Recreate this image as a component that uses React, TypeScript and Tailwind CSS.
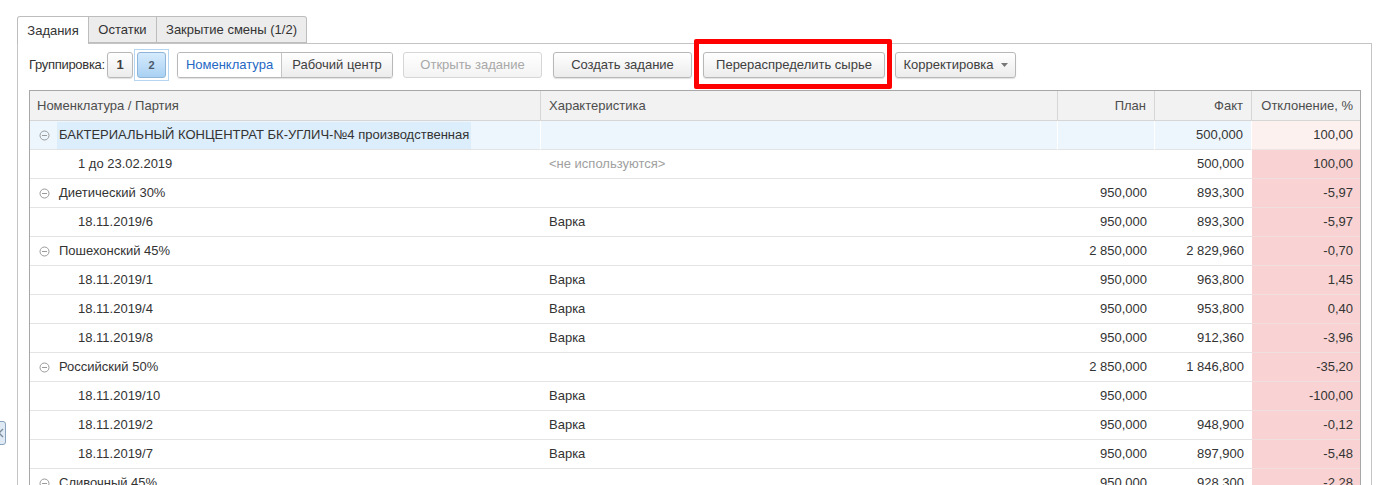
import React from "react"

type Row = {
  name: string
  group?: boolean
  chr?: string
  chrMuted?: boolean
  plan?: string
  fact?: string
  dev: string
}

const rows: Row[] = [
  { name: "БАКТЕРИАЛЬНЫЙ КОНЦЕНТРАТ БК-УГЛИЧ-№4 производственная", group: true, fact: "500,000", dev: "100,00" },
  { name: "1 до 23.02.2019", chr: "<не используются>", chrMuted: true, fact: "500,000", dev: "100,00" },
  { name: "Диетический 30%", group: true, plan: "950,000", fact: "893,300", dev: "-5,97" },
  { name: "18.11.2019/6", chr: "Варка", plan: "950,000", fact: "893,300", dev: "-5,97" },
  { name: "Пошехонский 45%", group: true, plan: "2 850,000", fact: "2 829,960", dev: "-0,70" },
  { name: "18.11.2019/1", chr: "Варка", plan: "950,000", fact: "963,800", dev: "1,45" },
  { name: "18.11.2019/4", chr: "Варка", plan: "950,000", fact: "953,800", dev: "0,40" },
  { name: "18.11.2019/8", chr: "Варка", plan: "950,000", fact: "912,360", dev: "-3,96" },
  { name: "Российский 50%", group: true, plan: "2 850,000", fact: "1 846,800", dev: "-35,20" },
  { name: "18.11.2019/10", chr: "Варка", plan: "950,000", dev: "-100,00" },
  { name: "18.11.2019/2", chr: "Варка", plan: "950,000", fact: "948,900", dev: "-0,12" },
  { name: "18.11.2019/7", chr: "Варка", plan: "950,000", fact: "897,900", dev: "-5,48" },
  { name: "Сливочный 45%", group: true, plan: "950,000", fact: "928,300", dev: "-2,28" },
]

const btn =
  "h-[26px] flex items-center justify-center rounded-[3px] border border-[#b8b8b8] bg-linear-to-b from-white to-[#ececec] shadow-[0_1px_1px_rgba(0,0,0,0.12)] text-[13px] text-[#404040]"

// collapse marker in front of group rows
const Minus = () => (
  <svg width="11" height="11" viewBox="0 0 11 11" className="shrink-0">
    <circle cx="5.5" cy="5.5" r="4.5" fill="none" stroke="#9a9a9a" strokeWidth="1" />
    <line x1="3" y1="5.5" x2="8" y2="5.5" stroke="#9a9a9a" strokeWidth="1" />
  </svg>
)

const Toolbar: React.FC = () => (
  <div className="flex items-center h-[26px]">
    <span className="text-[13px] text-[#333] w-[78px] tracking-[-0.3px] whitespace-nowrap">Группировка:</span>
    <div className={`${btn} w-[26px] text-[11px] font-bold text-[#555]`}>1</div>
    <div className="ml-[1px] p-[2px] border border-[#b5d6f3] -my-[3px]">
      <div className="h-[26px] w-[29px] flex items-center justify-center rounded-[3px] border border-[#8fb6d9] bg-linear-to-b from-[#d6ebfd] to-[#a9d1f3] text-[11px] font-bold text-[#4a5a6a]">
        2
      </div>
    </div>
    <div className="ml-[8px] flex h-[26px] rounded-[3px] border border-[#b8b8b8] shadow-[0_1px_1px_rgba(0,0,0,0.12)] overflow-hidden text-[13px]">
      <div className="w-[104px] flex items-center justify-center bg-white text-[#2468c4] border-r border-[#c4c4c4]">
        Номенклатура
      </div>
      <div className="w-[110px] flex items-center justify-center bg-linear-to-b from-white to-[#ececec] text-[#404040]">
        Рабочий центр
      </div>
    </div>
    <div className="ml-[10px] w-[139px] h-[26px] flex items-center justify-center rounded-[3px] border border-[#d6d6d6] bg-linear-to-b from-white to-[#f3f3f3] text-[13px] text-[#a8a8a8]">
      Открыть задание
    </div>
    <div className={`${btn} ml-[11px] w-[139px]`}>Создать задание</div>
    <div className={`${btn} ml-[11px] w-[182px]`}>Перераспределить сырье</div>
    <div className={`${btn} ml-[10px] w-[121px] gap-[7px]`}>
      <span>Корректировка</span>
      <svg width="7" height="4" viewBox="0 0 7 4">
        <path d="M0 0h7L3.5 4z" fill="#777" />
      </svg>
    </div>
  </div>
)

const Grid: React.FC = () => (
  <div className="mt-[12px] w-[1332px] border border-[#a7a7a7] text-[13px] text-[#333]">
    <div className="grid grid-cols-[511px_517px_97px_97px_1fr] h-[30px] bg-[#f2f2f2] border-b border-[#d6d6d6] text-[#4d4d4d]">
      <div className="flex items-center pl-[7px] border-r border-[#d6d6d6]">Номенклатура / Партия</div>
      <div className="flex items-center pl-[8px] border-r border-[#d6d6d6]">Характеристика</div>
      <div className="flex items-center justify-end pr-[8px] border-r border-[#d6d6d6]">План</div>
      <div className="flex items-center justify-end pr-[8px] border-r border-[#d6d6d6]">Факт</div>
      <div className="flex items-center justify-end pr-[7px]">Отклонение, %</div>
    </div>
    {rows.map((r, i) => {
      const current = i === 0
      const cell = `flex items-center h-[29px] border-b ${current ? "bg-[#eef6fd] border-[#e3e3e3] border-r border-r-white" : "border-[#e4e4e4]"}`
      return (
        <div key={i} className="grid grid-cols-[511px_517px_97px_97px_1fr]">
          <div className={`${cell} ${r.group ? "pl-[9px]" : "pl-[48px]"}`}>
            {r.group && <Minus />}
            {r.group ? (
              <span className={`ml-[7px] h-[27px] flex items-center px-[2px] ${current ? "bg-[#dcedfb]" : ""}`}>{r.name}</span>
            ) : (
              <span>{r.name}</span>
            )}
          </div>
          <div className={`${cell} pl-[8px] ${r.chrMuted ? "text-[#a0a0a0]" : ""}`}>{r.chr}</div>
          <div className={`${cell} justify-end pr-[8px]`}>{r.plan}</div>
          <div className={`${cell} justify-end pr-[8px]`}>{r.fact}</div>
          <div
            className={`flex items-center justify-end h-[29px] pr-[7px] border-b ${
              current ? "bg-[#fdf1f0] border-[#efe4e4]" : "bg-[#f9d3d3] border-[#f1dede]"
            }`}
          >
            {r.dev}
          </div>
        </div>
      )
    })}
  </div>
)

export default function App() {
  return (
    <div
      className="relative h-[485px] w-[1376px] overflow-hidden bg-white"
      style={{ fontFamily: '"Liberation Sans", Arial, sans-serif' }}
    >
      {/* side panel collapse handle */}
      <div className="absolute left-[-9px] top-[421px] w-[15px] h-[24px] rounded-[3px] border border-[#8aa3bd] bg-[#dfeaf5] flex items-center justify-end pr-[1px]">
        <svg width="6" height="10" viewBox="0 0 6 10">
          <path d="M5 1L1 5l4 4" fill="none" stroke="#7d8d9d" strokeWidth="1.4" />
        </svg>
      </div>

      <div className="pt-[16px] pl-[17px] w-[1372px]">
        <div className="flex text-[13px] text-[#333]">
          <div className="h-[28px] w-[72px] flex items-center justify-center bg-white border border-b-0 border-[#bdbdbd] rounded-tl-[3px] relative z-10 -mb-px">
            Задания
          </div>
          <div className="h-[27px] w-[68px] flex items-center justify-center bg-[#ececec] border border-l-0 border-[#bdbdbd]">
            Остатки
          </div>
          <div className="h-[27px] w-[150px] flex items-center justify-center bg-[#ececec] border border-l-0 border-[#bdbdbd] rounded-tr-[3px]">
            Закрытие смены (1/2)
          </div>
        </div>
        <div className="border border-[#c4c4c4] border-b-0 pl-[11px] pt-[8px] h-[460px]">
          <Toolbar />
          <Grid />
        </div>
      </div>

      {/* highlight frame around the redistribution button */}
      <div className="absolute left-[694px] top-[39px] w-[198px] h-[50px] border-[5px] border-[#ff0000] rounded-[2px]" />
    </div>
  )
}
